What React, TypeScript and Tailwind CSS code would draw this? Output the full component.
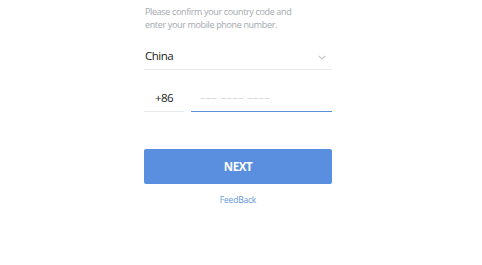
import React from "react";

const Chevron = () => (
  <svg width="8" height="5" viewBox="0 0 8 5" fill="none" className="mr-[6px] mt-[3px]">
    <path d="M0.8 0.8l3.2 3.2L7.2 0.8" stroke="#c2c6cb" strokeWidth="1.1" />
  </svg>
);

const App = () => {
  return (
    <div
      className="h-[265px] w-[482px] bg-white pl-[144px]"
      style={{ fontFamily: '"Open Sans", sans-serif' }}
    >
      <div className="w-[188px] pt-[5px]">
        <p className="pl-[1px] text-[9px] leading-[13px] tracking-[-0.35px] text-[#a3a8ad]">
          Please confirm your country code and
          <br />
          enter your mobile phone number.
        </p>

        <div className="mt-[12px] flex h-[27px] items-center justify-between border-b border-[#e8ebee] pl-[1px]">
          <span className="text-[11.5px] tracking-[-0.5px] text-[#222]">China</span>
          <Chevron />
        </div>

        <div className="mt-[14px] flex gap-[7px]">
          <div className="flex h-[28px] w-[40px] items-center justify-center border-b border-[#e8ebee]">
            <span className="text-[11.5px] tracking-[-0.5px] text-[#222]">+86</span>
          </div>
          <div className="flex h-[28px] flex-1 items-center border-b border-b-[#5b8fdb] pl-[9px]">
            <span className="text-[11px] tracking-[0.3px] text-[#d0d4d8]">––– –––– ––––</span>
          </div>
        </div>

        <button className="mt-[37px] flex h-[35px] w-full items-center justify-center rounded-[2px] bg-[#5a8fe0] text-[11.5px] font-bold tracking-[-0.4px] text-white">
          NEXT
        </button>

        <div className="mt-[10px] text-center text-[8.5px] tracking-[-0.2px] text-[#6397e0]">FeedBack</div>
      </div>
    </div>
  );
};

export default App;
